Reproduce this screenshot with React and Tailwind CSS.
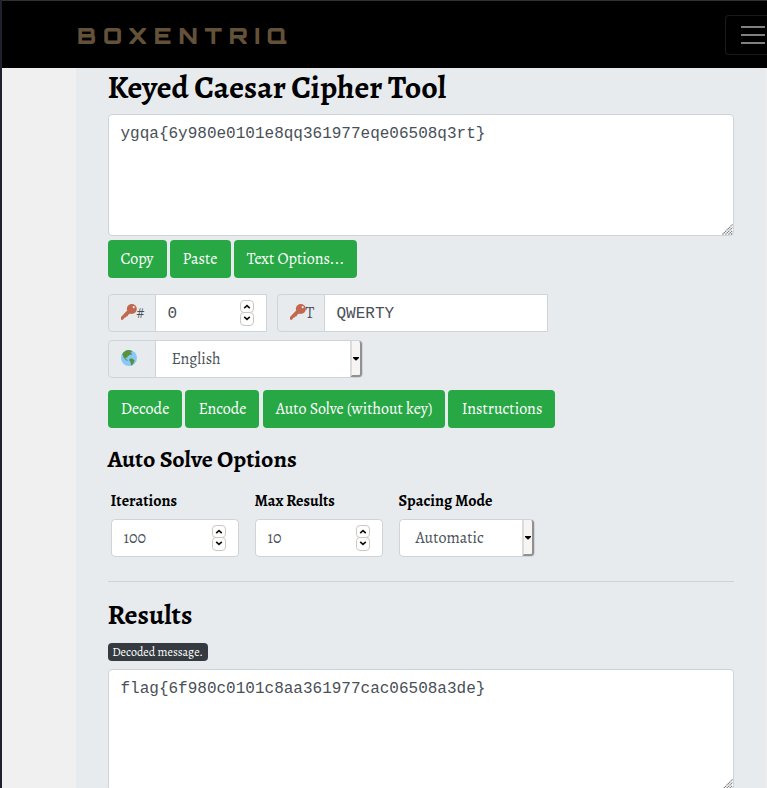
const serif = 'font-["Alegreya","Liberation_Serif",serif]';

function Btn({ className, children }) {
  return (
    <button className={`flex h-[38px] items-center justify-center rounded-[4px] bg-[#28a745] text-[16px] leading-[24px] whitespace-nowrap text-white ${className}`}>
      {children}
    </button>
  );
}

function Spinner() {
  return (
    <svg className="h-[26px] w-[14px] shrink-0" viewBox="0 0 14 26" fill="none">
      <rect x="0.5" y="0.5" width="13" height="12" rx="3.5" fill="#fff" stroke="#cdc7c2" />
      <rect x="0.5" y="12.5" width="13" height="13" rx="3.5" fill="#fff" stroke="#cdc7c2" />
      <path d="M4.2 8.2 7 5.6l2.800 2.600M4.200 16.800 7 19.400l2.800-2.600" stroke="#111" strokeWidth="1.600" />
    </svg>
  );
}

function KeyIcon() {
  return (
    <svg className="mb-[2px] h-[16px] w-[16px] shrink-0" viewBox="0 0 16 16">
      <circle cx="10.800" cy="5" r="5" fill="#c1694f" />
      <path d="M6.200 6.600 9.400 9.800 7.400 10.600 6.600 12.200 5.200 12.400 4.600 13.600 3.400 13.800 2 15.700 0 15.800 0 13Z" fill="#c1694f" />
      <circle cx="12.700" cy="3.200" r="1.100" fill="#e8ebee" />
    </svg>
  );
}

function Globe() {
  return (
    <svg className="mb-[2px] h-[16px] w-[16px]" viewBox="0 0 16 16">
      <circle cx="8" cy="8" r="8" fill="#88c9f9" />
      <path d="M1.200 4.200C2.500 1.800 5 .2 7.600.1l2.600.5.8 1.500-1.700.6 1.700 1-.3 1.300-1.600-.4-1.400 1.200-1.500 1 .3 1.300-1.200-.6-1 .7 1.200 1.300 1.200.6-.5.8-2.200-1.600-1.500-2.200ZM8.400 8.900l2.300-.6 2.900 1.900-.6 2-1.900 3-1 .3-.5-3.300-1.300-1.500Z" fill="#5c913b" />
    </svg>
  );
}

function SelectArrow() {
  return (
    <span className="flex h-full w-[12px] shrink-0 items-center justify-center rounded-r-[3px] border-r-2 border-b-2 border-l-2 border-r-[#919191] border-b-[#919191] border-l-[#dedcda] bg-[#f6f5f4]">
      <svg className="mt-px -ml-px h-[4px] w-[6px] shrink-0" viewBox="0 0 6 4"><path d="M0 0h6v1L3 3.800 0 1Z" fill="#000" /></svg>
    </span>
  );
}

function Grip() {
  return (
    <svg className="mt-auto ml-auto h-[11px] w-[11px]" viewBox="0 0 11 11" fill="none">
      <path d="M.5 10.500l10-10M3.500 10.500l7-7M6.500 10.500l4-4M9 10.500l1.500-1.500" stroke="#777" strokeWidth="1.100" strokeDasharray="1.400 .5" />
    </svg>
  );
}

function TextBox({ className, children }) {
  return (
    <div className={`flex w-[626px] rounded-[4px] border border-[#ced4da] bg-white ${className}`}>
      <div className='pt-[7px] pl-[11.500px] font-["Liberation_Mono",monospace] text-[16px] leading-[24px] whitespace-nowrap text-[#495057]'>{children}</div>
      <Grip />
    </div>
  );
}

function NumberField({ label, value }) {
  return (
    <div className="w-[128px]">
      <div className="-ml-[0.500px] h-[28px] text-[16px] leading-[21px] font-bold whitespace-nowrap text-black">{label}</div>
      <div className="flex h-[38px] items-center justify-between rounded-[4px] border border-[#ced4da] bg-white pr-[12px] pl-[11.500px] text-[16px] text-[#495057]">
        <span>{value}</span>
        <Spinner />
      </div>
    </div>
  );
}

export default function App() {
  return (
    <div className={`flex h-[788px] w-[767px] overflow-hidden bg-[#f0f0f0] ${serif}`}>
      <div className="w-[2px] shrink-0 bg-[#1f212e]" />
      <div className="flex w-[765px] shrink-0 flex-col">
        <header className="flex h-[68px] shrink-0 items-center justify-between border-t border-[#303030] bg-black pl-[75px]">
          <span className='mt-[2px] inline-block origin-left scale-x-[1.050] font-["Orbitron","Michroma","Inter",sans-serif] text-[22px] leading-none font-black tracking-[6.500px] whitespace-nowrap text-[#635239]'>BOXENTRIQ</span>
          <div className="flex h-[40px] w-[42px] items-center rounded-l-[4px] border border-r-0 border-[#1a1a1a] pl-[15px]">
            <div className="flex w-[24px] flex-col gap-[6px]">
              <div className="h-[2px] bg-[#808080]" />
              <div className="h-[2px] bg-[#808080]" />
              <div className="h-[2px] bg-[#808080]" />
            </div>
          </div>
        </header>
        <main className="ml-[74px] flex h-[720px] w-[690px] flex-col bg-[#e8ebee] pl-[32px]">
          <h1 className="-ml-[0.500px] h-[46px] shrink-0 text-[32px] leading-[38px] font-bold whitespace-nowrap text-black">Keyed Caesar Cipher Tool</h1>
          <TextBox className="h-[122px] shrink-0">{'ygqa{6y980e0101e8qq361977eqe06508q3rt}'}</TextBox>
          <div className="mt-[4px] flex gap-[3px]">
            <Btn className="w-[59px] pr-px">Copy</Btn>
            <Btn className="w-[61px] pr-px">Paste</Btn>
            <Btn className="w-[123px]">Text Options...</Btn>
          </div>
          <div className="mt-[16px] flex h-[38px] shrink-0 gap-[10px] text-[16px] text-[#495057]">
            <div className="flex w-[159px] rounded-l-[4px] border border-[#ced4da]">
              <div className="flex w-[47px] items-center border-r border-[#ced4da] pl-[11.500px]"><KeyIcon />#</div>
              <div className='flex flex-1 items-center justify-between bg-white pr-[12px] pl-[11.500px] font-["Liberation_Mono",monospace]'><span className="pt-px">0</span><Spinner /></div>
            </div>
            <div className="flex w-[271px] rounded-l-[4px] border border-[#ced4da]">
              <div className="flex w-[47px] items-center border-r border-[#ced4da] pl-[11.500px]"><KeyIcon />T</div>
              <div className='flex flex-1 items-center bg-white pt-[2px] pl-[11.500px] font-["Liberation_Mono",monospace]'>QWERTY</div>
            </div>
          </div>
          <div className="mt-[8px] flex h-[38px] w-[255px] shrink-0 rounded-[4px] border border-[#ced4da] text-[16px] text-[#495057]">
            <div className="flex w-[47px] items-center border-r border-[#ced4da] pl-[11.500px]"><Globe /></div>
            <div className="flex flex-1 items-center justify-between rounded-r-[3px] bg-white pl-[15.500px]"><span>English</span><SelectArrow /></div>
          </div>
          <div className="mt-[12px] flex gap-[3px]">
            <Btn className="w-[74px]">Decode</Btn>
            <Btn className="w-[74px] pl-px">Encode</Btn>
            <Btn className="ml-px w-[182px]">Auto Solve (without key)</Btn>
            <Btn className="w-[107px] pl-px">Instructions</Btn>
          </div>
          <h3 className="mt-[17px] -ml-[0.500px] h-[46px] shrink-0 text-[24px] leading-[29px] font-bold whitespace-nowrap text-black">Auto Solve Options</h3>
          <div className="ml-[3px] flex h-[66px] shrink-0 gap-[16px]">
            <NumberField label="Iterations" value="100" />
            <NumberField label="Max Results" value="10" />
            <div className="w-[136px]">
              <div className="-ml-[0.500px] h-[28px] text-[16px] leading-[21px] font-bold whitespace-nowrap text-black">Spacing Mode</div>
              <div className="flex h-[38px] items-center justify-between rounded-[4px] border border-[#ced4da] bg-white pl-[15.500px] text-[16px] text-[#495057]"><span>Automatic</span><SelectArrow /></div>
            </div>
          </div>
          <div className="mt-[24px] h-px w-[626px] shrink-0 bg-[#d0d3d6]" />
          <h2 className="mt-[16px] -ml-[0.500px] h-[45px] shrink-0 text-[28px] leading-[34px] font-bold text-black">Results</h2>
          <div className="flex h-[18px] w-[100px] shrink-0 items-center justify-center rounded-[4px] bg-[#343a40] pr-px text-[12px] whitespace-nowrap text-white">Decoded message.</div>
          <TextBox className="mt-[8px] h-[122px] shrink-0">{'flag{6f980c0101c8aa361977cac06508a3de}'}</TextBox>
        </main>
      </div>
    </div>
  );
}
